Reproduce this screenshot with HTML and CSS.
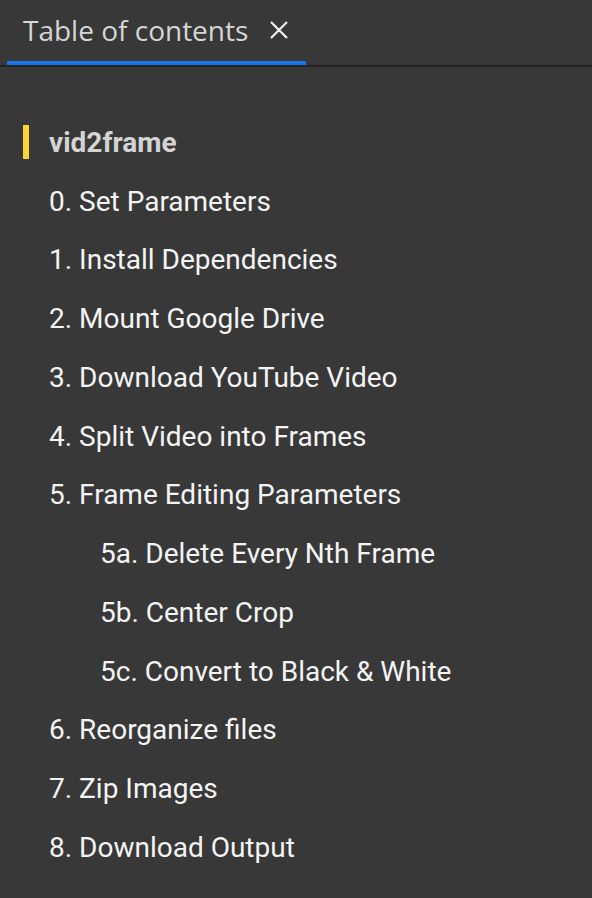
FILE: index.html
```html
<!DOCTYPE html>
<html>
<head>
<meta charset="utf-8">
<link rel="stylesheet" href="styles.css">
</head>
<body>
<div class="panel">
  <div class="tabbar">
    <div class="tab">
      <span class="tab-title">Table of contents</span>
      <svg class="close" viewBox="0 0 20 20" width="20" height="20">
        <path d="M2 2 L18 18 M18 2 L2 18" stroke="#f2f2f2" stroke-width="2.2" fill="none"/>
      </svg>
    </div>
  </div>
  <ul class="toc">
    <li class="item active">vid2frame</li>
    <li class="item">0. Set Parameters</li>
    <li class="item">1. Install Dependencies</li>
    <li class="item">2. Mount Google Drive</li>
    <li class="item">3. Download YouTube Video</li>
    <li class="item">4. Split Video into Frames</li>
    <li class="item">5. Frame Editing Parameters</li>
    <li class="item sub">5a. Delete Every Nth Frame</li>
    <li class="item sub">5b. Center Crop</li>
    <li class="item sub">5c. Convert to Black &amp; White</li>
    <li class="item">6. Reorganize files</li>
    <li class="item">7. Zip Images</li>
    <li class="item">8. Download Output</li>
  </ul>
</div>
</body>
</html>
```
FILE: styles.css
```css
html, body {
  margin: 0;
  padding: 0;
  background: #383838;
}

.panel {
  width: 592px;
  height: 898px;
  background: #383838;
  font-family: Roboto, "Liberation Sans", sans-serif;
  overflow: hidden;
}

.tabbar {
  height: 67px;
  border-bottom: 2px solid #222222;
  box-sizing: border-box;
  padding-left: 7px;
  display: flex;
}

.tab {
  width: 299px;
  height: 100%;
  box-sizing: border-box;
  border-bottom: 4px solid #1a73e8;
  display: flex;
  align-items: center;
  padding-left: 16px;
  padding-bottom: 2px;
}

.tab-title {
  font-family: "Open Sans", Roboto, sans-serif;
  font-size: 28px;
  color: #d6d6d6;
}

.close {
  margin-left: 21px;
  width: 20px;
  height: 20px;
}

.toc {
  list-style: none;
  margin: 0;
  padding: 46px 0 0 0;
}

.item {
  height: 58.75px;
  display: flex;
  align-items: center;
  padding-left: 49px;
  font-size: 28px;
  color: #f4f4f4;
  position: relative;
}

.item.sub {
  padding-left: 100px;
}

.item.active {
  font-weight: 700;
  color: #d4d4d4;
}

.item.active::before {
  content: "";
  position: absolute;
  left: 23px;
  top: 12px;
  width: 6px;
  height: 34px;
  background: #fbd335;
}
```
